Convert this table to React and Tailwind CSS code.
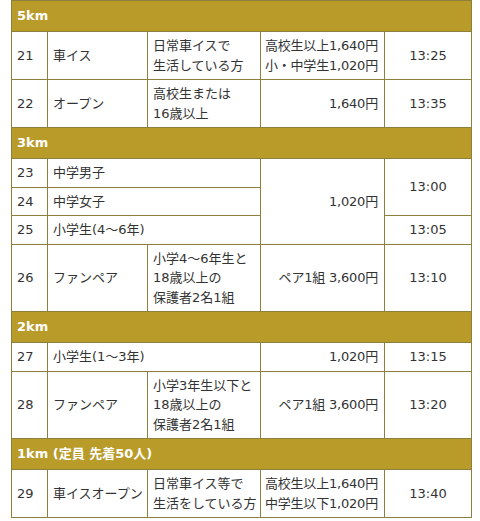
import React from "react";

const td = "border border-[#8d7f3c] px-[5px] py-[4px] align-middle leading-[19.5px]";
const pr = "border border-[#8d7f3c] pl-0 pr-[6px] py-[4px] align-middle leading-[19.5px] text-right whitespace-nowrap tracking-[-0.2px]";
const tm = "border border-[#8d7f3c] px-[5px] py-[4px] align-middle leading-[19.5px] text-center";
const hd = "border border-[#8d7f3c] bg-[#b99b2a] text-white font-bold px-[5px] py-[5px] leading-[20px] text-left";

function Head({ children }) {
  return (
    <tr>
      <th colSpan={5} className={hd}>{children}</th>
    </tr>
  );
}

export default function App() {
  return (
    <div className="bg-white w-[480px] h-[521px] overflow-hidden">
      <table
        className="ml-[11px] table-fixed border-collapse text-[13px] text-[#333]"
        style={{ width: 460, fontFamily: '"DejaVu Sans", "Noto Sans CJK JP", sans-serif' }}
      >
        <colgroup>
          <col className="w-[36px]" />
          <col className="w-[100px]" />
          <col className="w-[113px]" />
          <col className="w-[124px]" />
          <col className="w-[87px]" />
        </colgroup>
        <tbody>
          <Head>5km</Head>
          <tr>
            <td className={td}>21</td>
            <td className={td}>車イス</td>
            <td className={td}>日常車イスで<br />生活している方</td>
            <td className={pr}>高校生以上1,640円<br />小・中学生1,020円</td>
            <td className={tm}>13:25</td>
          </tr>
          <tr>
            <td className={td}>22</td>
            <td className={td}>オープン</td>
            <td className={td}>高校生または<br />16歳以上</td>
            <td className={pr}>1,640円</td>
            <td className={tm}>13:35</td>
          </tr>
          <Head>3km</Head>
          <tr>
            <td className={td}>23</td>
            <td className={td} colSpan={2}>中学男子</td>
            <td className={pr} rowSpan={3}>1,020円</td>
            <td className={tm} rowSpan={2}>13:00</td>
          </tr>
          <tr>
            <td className={td}>24</td>
            <td className={td} colSpan={2}>中学女子</td>
          </tr>
          <tr>
            <td className={td}>25</td>
            <td className={td} colSpan={2}>小学生(4～6年)</td>
            <td className={tm}>13:05</td>
          </tr>
          <tr>
            <td className={td}>26</td>
            <td className={td}>ファンペア</td>
            <td className={td}>小学4～6年生と<br />18歳以上の<br />保護者2名1組</td>
            <td className={pr}>ペア1組 3,600円</td>
            <td className={tm}>13:10</td>
          </tr>
          <Head>2km</Head>
          <tr>
            <td className={td}>27</td>
            <td className={td} colSpan={2}>小学生(1～3年)</td>
            <td className={pr}>1,020円</td>
            <td className={tm}>13:15</td>
          </tr>
          <tr>
            <td className={td}>28</td>
            <td className={td}>ファンペア</td>
            <td className={td}>小学3年生以下と<br />18歳以上の<br />保護者2名1組</td>
            <td className={pr}>ペア1組 3,600円</td>
            <td className={tm}>13:20</td>
          </tr>
          <Head>1km (定員 先着50人)</Head>
          <tr>
            <td className={td}>29</td>
            <td className={td + " whitespace-nowrap"}>車イスオープン</td>
            <td className={td + " whitespace-nowrap"}>日常車イス等で<br />生活をしている方</td>
            <td className={pr}>高校生以上1,640円<br />中学生以下1,020円</td>
            <td className={tm}>13:40</td>
          </tr>
        </tbody>
      </table>
    </div>
  );
}
